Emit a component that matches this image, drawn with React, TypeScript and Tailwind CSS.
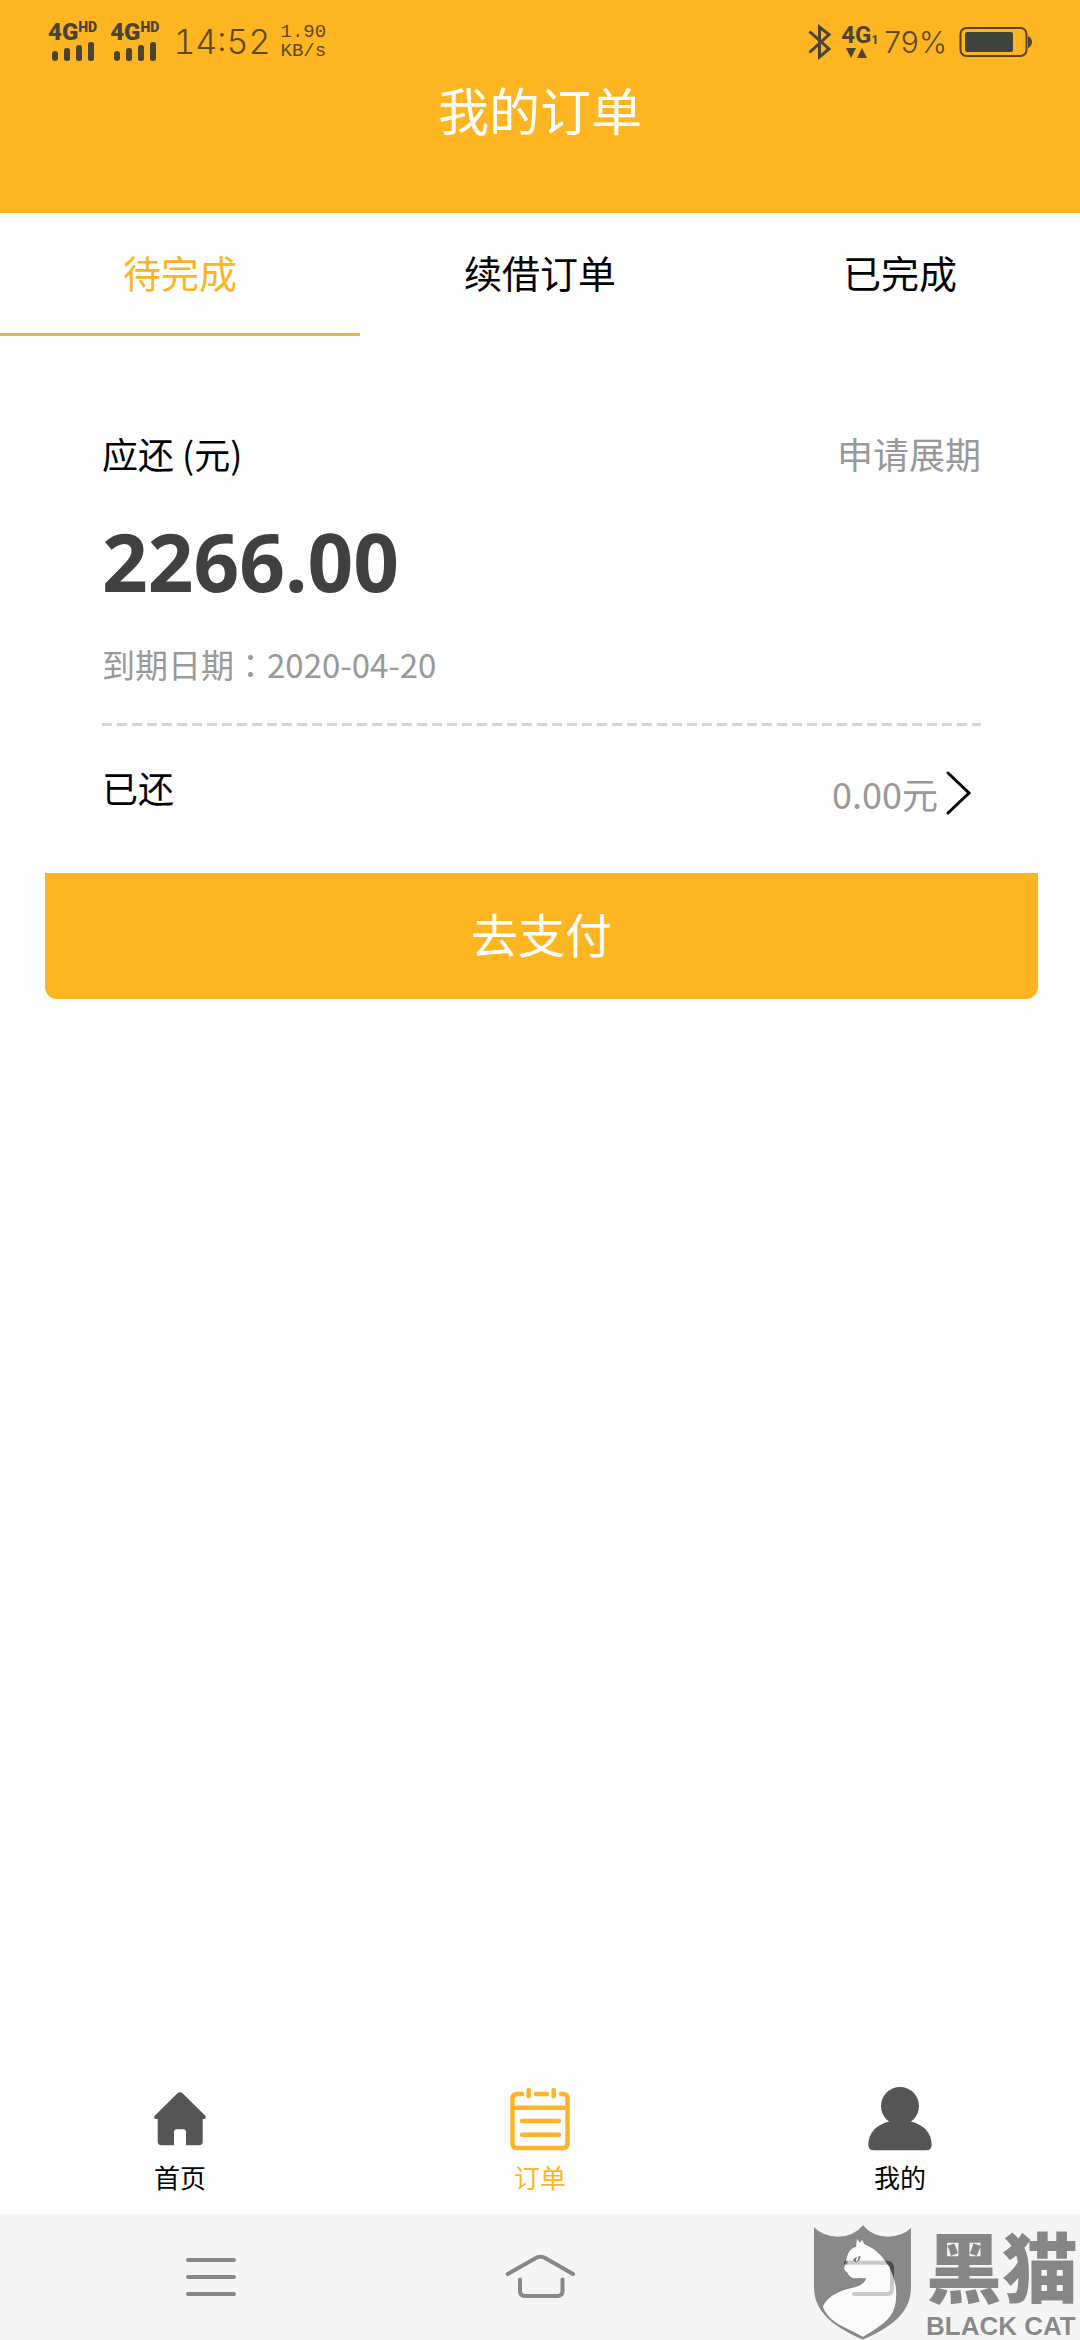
import React from "react";

const INK = "#4a4430";

function Signal() {
  return (
    <div className="flex flex-col items-start">
      <div className="flex items-start font-['Roboto'] font-black text-[#4a4430]">
        <span className="text-2xl leading-[20px]">4G</span>
        <span className="text-sm leading-[11px]">HD</span>
      </div>
      <svg width="48" height="20" viewBox="0 0 48 20" fill={INK} aria-hidden="true">
        <rect x="4" y="9" width="6" height="10" rx="3" />
        <rect x="16" y="6" width="6" height="13" rx="2.5" />
        <rect x="28" y="3" width="6" height="16" rx="2.5" />
        <rect x="40" y="0" width="6" height="19" rx="2.5" />
      </svg>
    </div>
  );
}

function StatusBar() {
  return (
    <div className="flex h-[84px] items-center justify-between pr-[48px] pl-[48px] font-['Inter'] text-[#5c4a1c]">
      <div className="flex items-center">
        <div className="flex gap-[13px]">
          <Signal />
          <Signal />
        </div>
        <span className="ml-[14px] text-[34px] leading-[36px] font-light tabular-nums">14:52</span>
        <span className="ml-[10px] flex flex-col font-['Liberation_Mono',monospace] text-[19px] leading-[19px]">
          <span>1.90</span>
          <span>KB/s</span>
        </span>
      </div>
      <div className="flex items-center">
        <svg width="24" height="36" viewBox="0 0 24 36" fill="none" stroke={INK} strokeWidth="3" aria-hidden="true">
          <path d="M1.5 7.5 L21 25 L11.500 33 V3 L21 10.500 L1.500 28.500" />
        </svg>
        <div className="ml-[9px] flex w-[34px] flex-col font-['Roboto'] font-bold text-[#4a4430]">
          <div className="flex items-end">
            <span className="text-2xl leading-[21px]">4G</span>
            <span className="text-xs leading-[12px]">1</span>
          </div>
          <svg width="34" height="14" viewBox="0 0 34 14" fill={INK} aria-hidden="true">
            <path d="M5 2 H15 L10 12 Z M16 12 H26 L21 2 Z" />
          </svg>
        </div>
        <span className="ml-[9px] text-[30px] leading-[36px] font-light">79%</span>
        <svg className="ml-[12px]" width="73" height="32" viewBox="0 0 73 32" aria-hidden="true">
          <rect x="1.500" y="2" width="66" height="28" rx="6" fill="none" stroke="#5c4312" strokeWidth="2" />
          <rect x="6" y="6" width="48" height="20" rx="2" fill="#3f4340" />
          <path d="M69 10 Q73 12 73 16 T69 22 Z" fill={INK} />
        </svg>
      </div>
    </div>
  );
}

const tabs = ["待完成", "续借订单", "已完成"];

function HomeIcon() {
  return (
    <svg width="64" height="64" viewBox="0 0 64 64" fill="#555" aria-hidden="true">
      <path d="M29.500 6.200 Q32 4.200 34.500 6.200 L57.500 29 Q58.500 32 56 32 H54.700 V54.500 Q54.700 58.300 51 58.300 H38 V45 Q38 42.300 35.300 42.300 H28.700 Q26 42.300 26 45 V58.300 H13.500 Q9.700 58.300 9.700 54.500 V32 H8 Q5.500 32 6.500 29 Z" />
    </svg>
  );
}

function OrderIcon() {
  return (
    <svg width="64" height="64" viewBox="0 0 64 64" fill="none" stroke="#fdb42c" strokeWidth="4.500" strokeLinecap="round" aria-hidden="true">
      <path d="M14 7 H9 Q4.500 7 4.500 11.500 V56.500 Q4.500 61 9 61 H55 Q59.500 61 59.500 56.500 V11.500 Q59.500 7 55 7 H53 M28 7 H39 M4.500 20.700 H59.500 M14 34 H51 M14 47.700 H51 M20.700 3 V9.300 M45.700 3 V9.300" />
    </svg>
  );
}

function PersonIcon() {
  return (
    <svg width="64" height="64" viewBox="0 0 64 64" fill="#555" aria-hidden="true">
      <circle cx="32" cy="19" r="19" />
      <path d="M21 34.500 Q32 38 43 34.500 C56 38 63.700 46 63.700 58 Q63.700 63.300 58 63.300 H6 Q0.300 63.300 0.300 58 C0.300 46 8 38 21 34.500 Z" />
      <rect x="22" y="30" width="20" height="10" />
    </svg>
  );
}

function Watermark() {
  return (
    <div className="pointer-events-none absolute right-0 bottom-0 flex items-end gap-[15px] pr-[2px]">
      <svg width="97" height="115" viewBox="0 0 97 115" aria-hidden="true">
        <path
          fill="#000"
          fillOpacity="0.44"
          fillRule="evenodd"
          d="M0 2.300 Q9 11.500 24 11.700 Q40 11.500 49 0.300 Q58 11.500 74 11.700 Q88 11.500 97 3 V61.700 C97 83 85 99 49 114.500 C13 99 0 83 0 61.700 Z M43 14 L46 18 L48 15 L50.500 19.500 C66 25 79 43 81.700 61.700 Q83 73 80.700 81.700 C77 95 66 101 49 111.700 C32 102 15 98 9 81.700 C12 74 19 69.500 29 65.500 C38 62 49 63 52.300 53.300 Q46 52.500 39.500 53.300 Q35 51.500 34 48.300 Q30 45 30.300 43.300 L32.300 36.700 C33 29 36 23.500 42.300 21.700 Q42.500 18 43 14 Z"
        />
        <path
          fill="#fff"
          fillOpacity="0.55"
          d="M43 14 L46 18 L48 15 L50.500 19.500 C66 25 79 43 81.700 61.700 Q83 73 80.700 81.700 C77 95 66 101 49 111.700 C32 102 15 98 9 81.700 C12 74 19 69.500 29 65.500 C38 62 49 63 52.300 53.300 Q46 52.500 39.500 53.300 Q35 51.500 34 48.300 Q30 45 30.300 43.300 L32.300 36.700 C33 29 36 23.500 42.300 21.700 Q42.500 18 43 14 Z"
        />
        <path d="M39 35 Q42 31 46.500 31 Q46 37 41 37 Z" fill="#777" />
        <path d="M44 31 L42.500 36" stroke="#fff" strokeWidth="1.500" />
        <path d="M31 38 L34 35.500 L33 40 Z" fill="#777" />
      </svg>
      <div className="flex flex-col text-black/45">
        <span className="mb-[10px] font-['Noto_Sans_CJK_SC',sans-serif] text-[76px] leading-[76px] font-black">黑猫</span>
        <span className="font-['Liberation_Sans',sans-serif] text-[26px] leading-[28px] font-bold">BLACK CAT</span>
      </div>
    </div>
  );
}

export default function App() {
  return (
    <div className="relative flex min-h-screen flex-col bg-[#fefefe] font-['Noto_Sans_CJK_SC',sans-serif] text-black">
      <header className="bg-[#fdb622] pb-[79px]">
        <StatusBar />
        <h1 className="text-center text-[51px] leading-[50px] text-white">我的订单</h1>
      </header>

      <div role="tablist" className="grid grid-cols-3">
        {tabs.map((tab, i) => (
          <button
            key={tab}
            role="tab"
            aria-selected={i === 0}
            className={
              i === 0
                ? "border-b-3 border-[#e8b845] pt-[33px] pb-[35px] text-[38px] leading-[52px] text-[#fdb622]"
                : "border-b-3 border-transparent pt-[33px] pb-[35px] text-[38px] leading-[52px]"
            }
          >
            {tab}
          </button>
        ))}
      </div>

      <main className="flex-1 px-[45px] pt-[90px] pr-[42px]">
        <section className="px-[57px]">
          <div className="flex items-center justify-between text-[36px] leading-[54px]">
            <span>应还 (元)</span>
            <button className="text-[#999]">申请展期</button>
          </div>
          <p className="mt-[31px] font-['Noto_Sans',sans-serif] text-[80px] leading-[100px] font-bold text-[#404040]">2266.00</p>
          <p className="mt-[29px] font-['Noto_Sans_CJK_SC',sans-serif] text-[33px] leading-[48px] text-[#999]">
            到期日期<span className="font-['Noto_Sans_CJK_TC',sans-serif]" lang="zh-TW">：</span>2020-04-20
          </p>
          <div className="mt-[35px] h-[3px] bg-[repeating-linear-gradient(90deg,#d4d4d4_0_10px,transparent_10px_15px)]" />
          <div className="flex items-start justify-between pt-[34px] pb-[47px] text-[36px] leading-[54px]">
            <span>已还</span>
            <a href="#repaid" className="flex h-[66px] items-center gap-[6px] pr-[7px] text-[#999]">
              0.00元
              <svg width="30" height="46" viewBox="0 0 30 46" fill="none" stroke="#000" strokeWidth="3" strokeLinecap="round" aria-hidden="true">
                <path d="M4 3 L25 23 L4 43" />
              </svg>
            </a>
          </div>
        </section>
        <button className="h-[126px] w-full rounded-b-xl bg-[#fdb622] pb-[6px] text-[47px] leading-[60px] text-white">去支付</button>
      </main>

      <nav className="grid grid-cols-3 pt-[13px] pb-[19px] text-[26px] leading-[36px]">
        <a href="#home" className="flex flex-col items-center gap-[8px]">
          <HomeIcon />
          首页
        </a>
        <a href="#orders" className="flex flex-col items-center gap-[8px] text-[#fdb42c]">
          <OrderIcon />
          订单
        </a>
        <a href="#mine" className="flex flex-col items-center gap-[8px]">
          <PersonIcon />
          我的
        </a>
      </nav>

      <div className="flex h-[126px] items-center justify-between bg-[#f5f5f5] px-[176px]">
        <button aria-label="菜单">
          <svg width="70" height="70" viewBox="0 0 70 70" fill="none" stroke="#888" strokeWidth="4" strokeLinecap="round" aria-hidden="true">
            <path d="M12 18 H58 M12 35 H58 M12 52 H58" />
          </svg>
        </button>
        <button aria-label="主屏幕">
          <svg width="70" height="70" viewBox="0 0 70 70" fill="none" stroke="#888" strokeWidth="4" strokeLinecap="round" aria-hidden="true">
            <path d="M2.700 32 L30 16.500 Q35.500 13 41 16.500 L68 32 M15 37.500 V49 Q15 54 20 54 H52.500 Q57.500 54 57.500 49 V37.500" />
          </svg>
        </button>
        <button aria-label="返回">
          <svg width="70" height="70" viewBox="0 0 70 70" fill="none" stroke="#888" strokeWidth="4" strokeLinecap="round" aria-hidden="true">
            <path d="M12 20.700 H53 Q58 20.700 58 26 V47 Q58 52 53 52 H20" />
          </svg>
        </button>
      </div>

      <Watermark />
    </div>
  );
}
